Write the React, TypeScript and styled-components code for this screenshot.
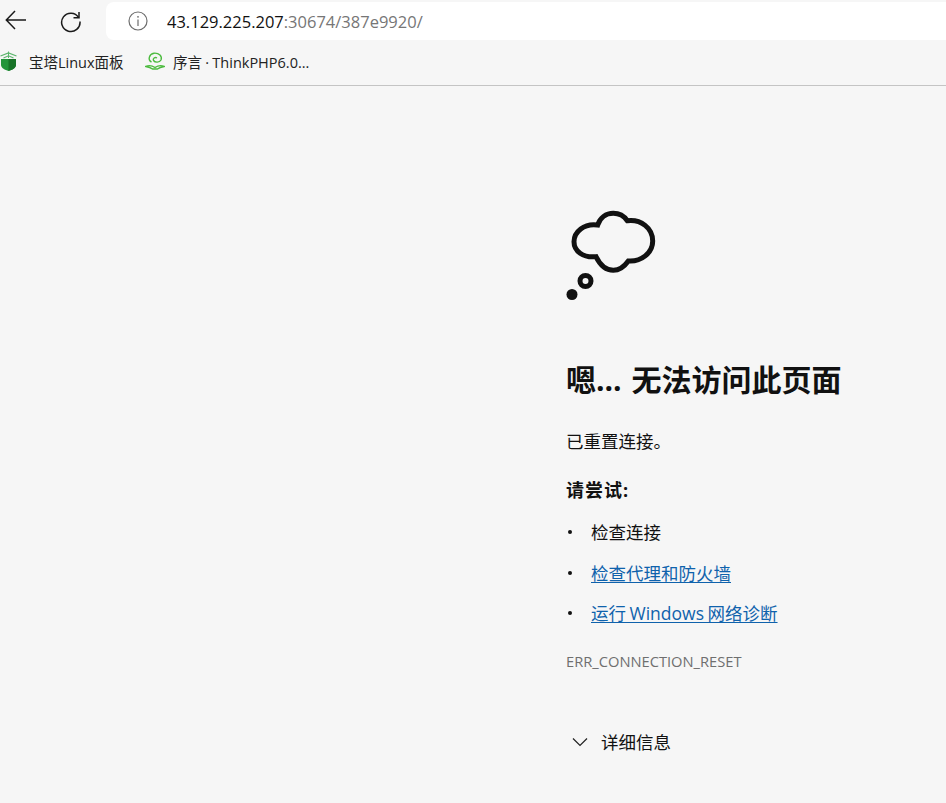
import React from "react";
import styled, { createGlobalStyle } from "styled-components";

const FONT = `"Open Sans", "Noto Sans CJK SC", sans-serif`;

const Global = createGlobalStyle`
  html, body { margin: 0; padding: 0; background: #f6f6f6; }
  body { font-family: ${FONT}; overflow: hidden; }
`;

const Page = styled.div`
  width: 946px;
  height: 803px;
  overflow: hidden;
  background: #f6f6f6;
  display: flex;
  flex-direction: column;
`;

const Toolbar = styled.div`
  height: 42px;
  display: flex;
  align-items: center;
  flex-shrink: 0;
`;

const NavButton = styled.button<{ $w: number; $pl?: number }>`
  width: ${(p) => p.$w}px;
  height: 40px;
  border: 0;
  padding: 0 0 0 ${(p) => p.$pl ?? 0}px;
  background: none;
  display: flex;
  align-items: center;
  justify-content: center;
  flex-shrink: 0;
`;

const AddressBar = styled.div`
  flex: 1;
  height: 38px;
  background: #fff;
  border-radius: 8px 0 0 8px;
  display: flex;
  align-items: center;
  padding-left: 22px;
  gap: 19px;
`;

const Url = styled.div`
  font-size: 16.5px;
  color: #767676;
  white-space: nowrap;
`;

const Host = styled.span`
  color: #111;
`;

const BookmarkBar = styled.div`
  height: 38px;
  box-sizing: content-box;
  padding-bottom: 5px;
  border-bottom: 1px solid #c4c4c4;
  display: flex;
  align-items: center;
  flex-shrink: 0;
`;

const Bookmark = styled.div<{ $w: number }>`
  width: ${(p) => p.$w}px;
  display: flex;
  align-items: center;
  font-size: 14.5px;
  word-spacing: -0.5px;
  color: #222;
  white-space: nowrap;
  flex-shrink: 0;
`;

const BookmarkIcon = styled.svg<{ $mr: number }>`
  margin-right: ${(p) => p.$mr}px;
  flex-shrink: 0;
`;

const Content = styled.main`
  flex: 1;
  padding: 124px 0 0 566px;
  color: #111;
`;

const Heading = styled.h1`
  margin: 58px 0 0;
  font-size: 30px;
  line-height: 40px;
  font-weight: 700;
  word-spacing: 2px;
  white-space: nowrap;
  color: #111;
`;

const Message = styled.p`
  margin: 30px 0 0;
  font-size: 17.5px;
  line-height: 22px;
  white-space: nowrap;
`;

const TryTitle = styled.p`
  margin: 27px 0 0;
  font-size: 18px;
  line-height: 22px;
  letter-spacing: 1px;
  font-weight: 700;
`;

const List = styled.ul`
  list-style: none;
  margin: 20px 0 0;
  padding: 0;
  display: flex;
  flex-direction: column;
  gap: 18.5px;
`;

const Item = styled.li`
  display: flex;
  align-items: center;
  font-size: 17.5px;
  line-height: 22px;
  word-spacing: -1px;
  white-space: nowrap;
`;

const Dot = styled.span`
  width: 4px;
  height: 4px;
  border-radius: 50%;
  background: #111;
  margin: 0 19px 0 2px;
  flex-shrink: 0;
`;

const Link = styled.a`
  color: #0f62ac;
  text-decoration: underline;
  text-underline-offset: 2px;
`;

const ErrorCode = styled.div`
  margin-top: 27px;
  font-size: 14.7px;
  line-height: 20px;
  color: #6f6f6f;
  white-space: nowrap;
`;

const Details = styled.div`
  margin-top: 60px;
  display: flex;
  align-items: center;
  font-size: 17.5px;
  line-height: 22px;
  padding-left: 6px;
  gap: 13px;
  white-space: nowrap;
`;

const BackIcon = () => (
  <svg width="24" height="24" viewBox="0 0 24 24" fill="none" stroke="#1a1a1a" strokeWidth="1.5">
    <path d="M22 11 H2.500 M11 2 L2.300 11 L11 20" />
  </svg>
);

const ReloadIcon = () => (
  <svg width="24" height="24" viewBox="0 0 24 24" fill="none" stroke="#1a1a1a" strokeWidth="1.5">
    <path d="M19.6 8.4 A9.2 9.2 0 1 0 21 12.5" />
    <path d="M14.5 8.7 H20 V3" />
  </svg>
);

const InfoIcon = () => (
  <svg width="20" height="20" viewBox="0 0 20 20" fill="none" stroke="#6d6d6d" strokeWidth="1.2">
    <circle cx="10" cy="10" r="9" />
    <path d="M10 8.6 V15" />
    <circle cx="10" cy="5.8" r="0.9" fill="#6d6d6d" stroke="none" />
  </svg>
);

const BaotaIcon = () => (
  <BookmarkIcon $mr={12} width="17" height="20" viewBox="0 0 17 20">
    <path d="M1 8 H16 V14 C16 17 12 19 8.500 20 C5 19 1 17 1 14 Z" fill="#23953a" />
    <path d="M8.500 8 H16 V14 C16 17 12 19 8.500 20 Z" fill="#177327" />
    <path d="M0.500 5 L8.500 2 L16.500 5 M3.500 7 L8.500 4.800 L13.500 7" fill="none" stroke="#5cb56d" strokeWidth="1.200" />
    <path d="M8.500 0.500 V7" stroke="#5cb56d" strokeWidth="1" />
  </BookmarkIcon>
);

const LeafIcon = () => (
  <BookmarkIcon $mr={8} width="20" height="18" viewBox="0 0 20 18" fill="none" stroke="#4cbb3f" strokeWidth="1.400">
    <path d="M6.500 10 C2.500 8 4 2 9 1.200 C14 0.800 17.500 4 16 8 C14.500 10.800 10 10.800 8.500 8.500 C7.500 6.500 10 4.800 12 6" />
    <path d="M0.800 14.500 C4 13 7 13.500 10 15.500 C13 13.500 16 13 19.200 14.500 C16 15 14 15.800 12.500 17 H7.500 C6 15.800 4 15 0.800 14.500 Z" />
  </BookmarkIcon>
);

const ThoughtCloud = () => (
  <svg width="92" height="92" viewBox="0 0 92 92" fill="none" stroke="#111" strokeWidth="5" style={{ display: "block" }}>
    <path d="M31.700 15 C34 8 40 3.300 47.300 3.300 C53 3.300 58 6 61.300 10.700 C75 9 86.700 18 86.700 31 C86.700 43 75 52 62.300 51 C58 57 53 60.300 47.300 60.300 C40 60.300 34 55 30 46.700 C17 48 8 41 8 31.700 C8 22 18 13 31.700 15 Z" />
    <circle cx="19.500" cy="71" r="5.500" />
    <circle cx="6" cy="84.500" r="5.500" fill="#111" stroke="none" />
  </svg>
);

const Chevron = () => (
  <svg width="16" height="10" viewBox="0 0 16 10" fill="none" stroke="#222" strokeWidth="1.200">
    <path d="M1 1.500 L8 8.500 L15 1.500" />
  </svg>
);

export default function App() {
  return (
    <Page>
      <Global />
      <Toolbar>
        <NavButton $w={32}><BackIcon /></NavButton>
        <NavButton $w={74} $pl={4}><ReloadIcon /></NavButton>
        <AddressBar>
          <InfoIcon />
          <Url><Host>43.129.225.207</Host>:30674/387e9920/</Url>
        </AddressBar>
      </Toolbar>
      <BookmarkBar>
        <Bookmark $w={145}><BaotaIcon />宝塔Linux面板</Bookmark>
        <Bookmark $w={200}><LeafIcon />序言 · ThinkPHP6.0...</Bookmark>
      </BookmarkBar>
      <Content>
        <ThoughtCloud />
        <Heading>嗯... 无法访问此页面</Heading>
        <Message>已重置连接。</Message>
        <TryTitle>请尝试:</TryTitle>
        <List>
          <Item><Dot />检查连接</Item>
          <Item><Dot /><Link href="#">检查代理和防火墙</Link></Item>
          <Item><Dot /><Link href="#">运行 Windows 网络诊断</Link></Item>
        </List>
        <ErrorCode>ERR_CONNECTION_RESET</ErrorCode>
        <Details><Chevron />详细信息</Details>
      </Content>
    </Page>
  );
}
